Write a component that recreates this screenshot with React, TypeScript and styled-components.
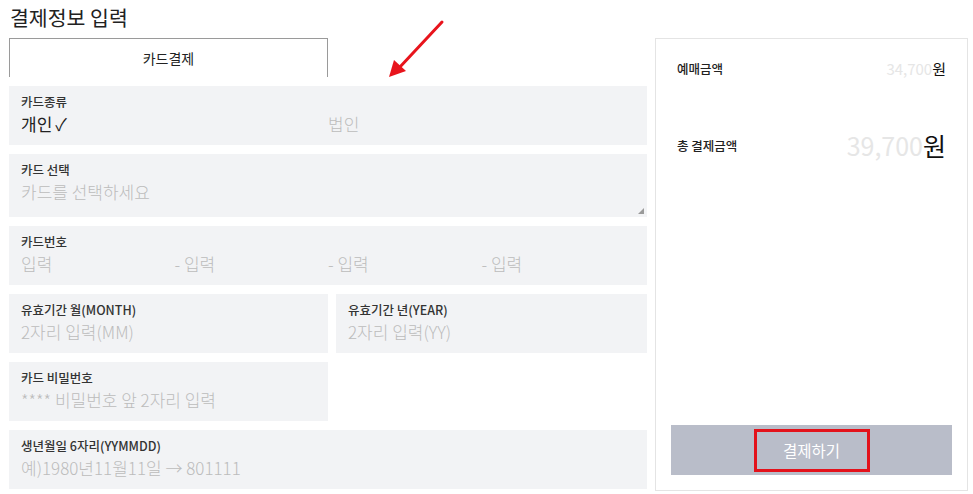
import React from 'react';
import styled, { createGlobalStyle } from 'styled-components';

const GlobalStyle = createGlobalStyle`
  html, body {
    margin: 0;
    padding: 0;
    background: #ffffff;
  }
  body {
    font-family: 'Noto Sans CJK KR', 'Noto Sans', sans-serif;
    color: #222;
  }
`;

const Page = styled.div`
  position: relative;
  display: flex;
  gap: 8px;
  width: 973px;
  height: 494px;
  padding: 0 5px 0 9px;
  box-sizing: border-box;
`;

const LeftCol = styled.div`
  width: 638px;
  display: flex;
  flex-direction: column;
`;

const Title = styled.h2`
  margin: 0;
  padding-left: 1px;
  height: 38px;
  line-height: 34px;
  font-size: 20.5px;
  font-weight: 400;
  color: #222;
`;

const Tab = styled.div`
  width: 319px;
  height: 39px;
  box-sizing: border-box;
  border: 1px solid #9a9a9a;
  border-bottom: none;
  display: flex;
  align-items: center;
  justify-content: center;
  font-size: 14px;
  color: #222;
  margin-bottom: 9px;
`;

const Rows = styled.div`
  display: flex;
  flex-direction: column;
  gap: 9px;
`;

const SplitRow = styled.div<{ $half?: boolean }>`
  display: grid;
  grid-template-columns: ${(p) => (p.$half ? '319px' : '319px 1fr')};
  gap: 8px;
`;

const Field = styled.div<{ $tall?: boolean }>`
  position: relative;
  background: #f2f3f5;
  height: ${(p) => (p.$tall ? '63px' : '59px')};
  box-sizing: border-box;
  padding: 7px 12px 0;
`;

const Label = styled.div`
  font-size: 12.5px;
  font-weight: 500;
  line-height: 17px;
  color: #333;
`;

const Value = styled.div<{ $cols?: number }>`
  display: grid;
  grid-template-columns: ${(p) => `repeat(${p.$cols || 1}, 1fr)`};
  margin-top: 3px;
  font-size: 17px;
  font-weight: 300;
  line-height: 22px;
`;

const Text = styled.span<{ $muted?: boolean }>`
  color: ${(p) => (p.$muted ? '#bcbcbc' : '#222')};
  font-weight: ${(p) => (p.$muted ? 300 : 400)};
  white-space: nowrap;
`;

const Check = styled.span`
  margin-left: 3px;
`;

const ResizeGrip = styled.span`
  position: absolute;
  right: 3px;
  bottom: 3px;
  width: 0;
  height: 0;
  border-left: 6px solid transparent;
  border-bottom: 6px solid #9a9a9a;
`;

const Summary = styled.aside`
  margin-top: 38px;
  width: 313px;
  height: 453px;
  box-sizing: border-box;
  border: 1px solid #e4e4e4;
  padding: 15px;
  display: flex;
  flex-direction: column;
`;

const SumRow = styled.div<{ $gap: number }>`
  display: flex;
  align-items: center;
  justify-content: space-between;
  padding: 0 6px;
  margin-top: ${(p) => p.$gap}px;
  height: 30px;
`;

const SumLabel = styled.span`
  font-size: 12.5px;
  font-weight: 500;
  color: #222;
`;

const SumValue = styled.span<{ $big?: boolean }>`
  font-size: ${(p) => (p.$big ? '25px' : '15px')};
  color: #111;
`;

const Hidden = styled.span`
  color: #e6e6e6;
`;

const PayButton = styled.button`
  margin-top: auto;
  height: 50px;
  width: 100%;
  border: none;
  background: #b9bdc9;
  display: flex;
  align-items: center;
  justify-content: center;
  font-family: inherit;
  cursor: pointer;
`;

const PayMark = styled.span`
  width: 116px;
  height: 43px;
  box-sizing: border-box;
  border: 3px solid #e3121b;
  display: flex;
  align-items: center;
  justify-content: center;
  font-size: 15.5px;
  color: #ffffff;
`;

const Arrow = styled.svg`
  position: absolute;
  left: 385px;
  top: 18px;
`;

export default function App() {
  return (
    <>
      <GlobalStyle />
      <Page>
        <LeftCol>
          <Title>결제정보 입력</Title>
          <Tab>카드결제</Tab>
          <Rows>
            <Field>
              <Label>카드종류</Label>
              <Value $cols={2}>
                <Text>
                  개인<Check>✓</Check>
                </Text>
                <Text $muted>법인</Text>
              </Value>
            </Field>
            <Field $tall>
              <Label>카드 선택</Label>
              <Value>
                <Text $muted>카드를 선택하세요</Text>
              </Value>
              <ResizeGrip />
            </Field>
            <Field>
              <Label>카드번호</Label>
              <Value $cols={4}>
                <Text $muted>입력</Text>
                <Text $muted>- 입력</Text>
                <Text $muted>- 입력</Text>
                <Text $muted>- 입력</Text>
              </Value>
            </Field>
            <SplitRow>
              <Field>
                <Label>유효기간 월(MONTH)</Label>
                <Value>
                  <Text $muted>2자리 입력(MM)</Text>
                </Value>
              </Field>
              <Field>
                <Label>유효기간 년(YEAR)</Label>
                <Value>
                  <Text $muted>2자리 입력(YY)</Text>
                </Value>
              </Field>
            </SplitRow>
            <SplitRow $half>
              <Field>
                <Label>카드 비밀번호</Label>
                <Value>
                  <Text $muted>**** 비밀번호 앞 2자리 입력</Text>
                </Value>
              </Field>
            </SplitRow>
            <Field>
              <Label>생년월일 6자리(YYMMDD)</Label>
              <Value>
                <Text $muted>예)1980년11월11일 → 801111</Text>
              </Value>
            </Field>
          </Rows>
        </LeftCol>
        <Summary>
          <SumRow $gap={-1}>
            <SumLabel>예매금액</SumLabel>
            <SumValue>
              <Hidden>34,700</Hidden>원
            </SumValue>
          </SumRow>
          <SumRow $gap={47}>
            <SumLabel>총 결제금액</SumLabel>
            <SumValue $big>
              <Hidden>39,700</Hidden>원
            </SumValue>
          </SumRow>
          <PayButton>
            <PayMark>결제하기</PayMark>
          </PayButton>
        </Summary>
        <Arrow width="64" height="64" viewBox="0 0 64 64">
          <line x1="57" y1="4" x2="14" y2="50" stroke="#e8141c" strokeWidth="3" strokeLinecap="round" />
          <polygon points="4,59 9,42 21,53" fill="#e8141c" />
        </Arrow>
      </Page>
    </>
  );
}
